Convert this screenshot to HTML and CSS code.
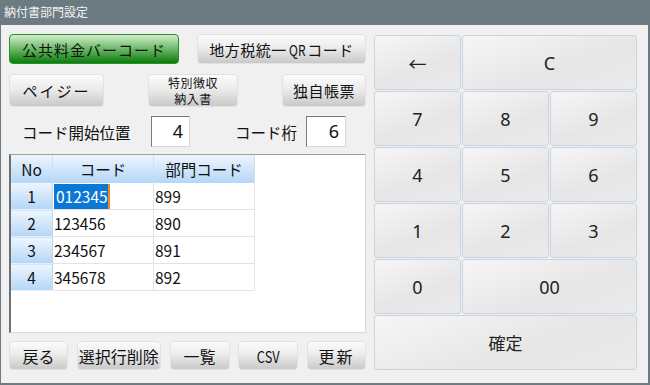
FILE: index.html
```html
<!DOCTYPE html>
<html lang="ja">
<head>
<meta charset="UTF-8">
<title>納付書部門設定</title>
<link rel="stylesheet" href="styles.css">
</head>
<body>
<div class="window">
  <div class="titlebar">納付書部門設定</div>
  <div class="client">
    <div class="left">
      <div class="row row-kind">
        <button class="btn btn-green w-public">公共料金バーコード</button>
        <button class="btn w-qr">地方税統一<span class="narrow">QR</span>コード</button>
      </div>
      <div class="row row-kind2">
        <button class="btn w-payeasy">ペイジー</button>
        <button class="btn btn-two w-special"><span class="line">特別徴収</span><span class="line">納入書</span></button>
        <button class="btn w-own">独自帳票</button>
      </div>
      <div class="row row-fields">
        <span class="label label-start">コード開始位置</span>
        <div class="field field-start">4</div>
        <span class="label label-digits">コード桁</span>
        <div class="field field-digits">6</div>
      </div>
      <div class="grid-box">
        <table class="grid">
          <thead>
            <tr>
              <th class="col-no">No</th>
              <th class="col-code">コード</th>
              <th class="col-dept">部門コード</th>
            </tr>
          </thead>
          <tbody>
            <tr>
              <td class="rowhead">1</td>
              <td><span class="selected">012345</span></td>
              <td>899</td>
            </tr>
            <tr>
              <td class="rowhead">2</td>
              <td>123456</td>
              <td>890</td>
            </tr>
            <tr>
              <td class="rowhead">3</td>
              <td>234567</td>
              <td>891</td>
            </tr>
            <tr>
              <td class="rowhead">4</td>
              <td>345678</td>
              <td>892</td>
            </tr>
          </tbody>
        </table>
      </div>
      <div class="row row-bottom">
        <button class="btn w-back">戻る</button>
        <button class="btn w-delete">選択行削除</button>
        <button class="btn w-list">一覧</button>
        <button class="btn w-csv"><span class="narrow">CSV</span></button>
        <button class="btn w-update">更新</button>
      </div>
    </div>
    <div class="keypad">
      <button class="key">←</button>
      <button class="key span2">C</button>
      <button class="key">7</button>
      <button class="key">8</button>
      <button class="key">9</button>
      <button class="key">4</button>
      <button class="key">5</button>
      <button class="key">6</button>
      <button class="key">1</button>
      <button class="key">2</button>
      <button class="key">3</button>
      <button class="key">0</button>
      <button class="key span2">00</button>
      <button class="key key-ok span3">確定</button>
    </div>
  </div>
</div>
</body>
</html>
```

FILE: styles.css
```css
body {
  margin: 0;
  padding: 0;
  font-family: "Noto Sans CJK JP", sans-serif;
}
.window {
  width: 650px;
  height: 385px;
  background-color: #6b7b81; /* marco de la ventana */
  display: flex;
  flex-direction: column;
}
.titlebar {
  height: 25px;
  line-height: 24px;
  padding-left: 4px;
  color: #f4f4f4;
  font-size: 12px;
}
.client {
  flex: 1;
  margin: 0 2px 2px 1px;
  background-color: #f0f0f0;
  display: flex;
  padding: 9px 11px 0 8px;
  gap: 8px;
}
.left {
  width: 357px;
  display: flex;
  flex-direction: column;
}
.row {
  display: flex;
  justify-content: space-between;
  align-items: center;
}
.btn {
  font-family: "Noto Sans CJK JP", sans-serif;
  font-size: 15px;
  color: #111;
  border: 1px solid #e2e2e2;
  border-radius: 4px;
  background: linear-gradient(#fbfbfb, #ececec 45%, #c9c9c9);
  padding: 0;
  letter-spacing: 0.5px;
}
.btn-green {
  border-color: #2a8f2a;
  background: linear-gradient(#d3eecd, #74bd70 45%, #0b7c0b);
}
.narrow {
  display: inline-block;
  transform: scaleX(0.8);
  letter-spacing: 0;
}
.row-kind {
  height: 30px;
}
.w-public { width: 170px; height: 30px; letter-spacing: 1px; }
.w-qr { width: 169px; height: 30px; }
.row-kind2 {
  height: 33px;
  margin-top: 10px;
}
.w-payeasy { width: 95px; height: 33px; letter-spacing: 2px; }
.w-special { width: 90px; height: 33px; }
.w-own { width: 84px; height: 33px; }
.btn-two {
  display: flex;
  flex-direction: column;
  align-items: center;
  justify-content: center;
  font-size: 12px;
}
.btn-two .line {
  display: block;
  flex: none;
  height: 17.5px;
  line-height: 17.5px;
}
.btn-two .line + .line {
  margin-top: -2px;
}
.row-fields {
  height: 31px;
  margin-top: 9px;
  justify-content: flex-start;
}
.label {
  font-size: 15.5px;
  color: #111;
  white-space: nowrap;
}
.label-start {
  margin-left: 13px;
  width: 112px;
}
.label-digits {
  margin-left: 45px;
  width: 63px;
}
.field {
  background-color: #fff;
  border: 1px solid #7a7a7a;
  border-right-color: #d8d8d8;
  border-bottom-color: #d8d8d8;
  font-family: "Noto Sans", sans-serif;
  font-size: 18px;
  line-height: 29px;
  text-align: right;
  padding-right: 6px;
  box-sizing: border-box;
  color: #111;
}
.field-start {
  width: 39px;
  margin-left: 17px;
  height: 31px;
}
.field-digits {
  width: 40px;
  margin-left: 8px;
  height: 31px;
}
.grid-box {
  margin-top: 7px;
  height: 179px;
  box-sizing: border-box;
  background-color: #fff;
  border-top: 1px solid #a0a0a0;
  border-left: 2px solid #6f6f6f;
  border-right: 1px solid #dadada;
  border-bottom: 1px solid #dadada;
}
.grid {
  border-collapse: collapse;
  font-size: 15.5px;
  color: #111;
}
.grid th {
  height: 28px;
  font-weight: normal;
  background: linear-gradient(#edf5fe, #b4d6f8);
  border-right: 1px solid #d6dde6;
  padding: 0;
}
.grid td {
  height: 26px;
  border-right: 1px solid #e3e3e3;
  border-bottom: 1px solid #e3e3e3;
  padding: 0 0 0 1px;
}
.col-no { width: 41px; }
.col-code { width: 100px; }
.col-dept { width: 100px; }
.grid td.rowhead {
  text-align: center;
  background: linear-gradient(#eef6fe, #b4d6f8);
  border-right: 1px solid #c8d4e0;
  border-bottom: 1px solid #e8eef5;
  padding: 0;
}
.selected {
  background-color: #0a78d4;
  color: #fff;
  padding: 1px 0 2px 2px;
  border-right: 2px solid #f08a24; /* cursor */
}
.row-bottom {
  height: 29px;
  margin-top: 8px;
}
.row-bottom .btn {
  height: 29px;
  font-size: 16px;
  letter-spacing: 0;
}
.w-back { width: 59px; }
.w-delete { width: 84px; }
.w-list { width: 60px; }
.w-csv { width: 60px; }
.w-update { width: 59px; letter-spacing: 2px !important; }
.keypad {
  width: 263px;
  height: 335px;
  margin-top: 1px;
  display: grid;
  grid-template-columns: repeat(3, 1fr);
  grid-template-rows: repeat(6, 1fr);
  gap: 1px;
}
.key {
  font-family: "Noto Sans", "Noto Sans CJK JP", sans-serif;
  font-size: 18px;
  color: #222;
  border: 1px solid #c8d5e1;
  border-radius: 3px;
  background: linear-gradient(160deg, #f6f6f6, #e6e6e6 60%, #ebebeb);
  padding: 0;
}
.key-ok {
  font-size: 17px;
}
.span2 { grid-column: span 2; }
.span3 { grid-column: span 3; }
```
